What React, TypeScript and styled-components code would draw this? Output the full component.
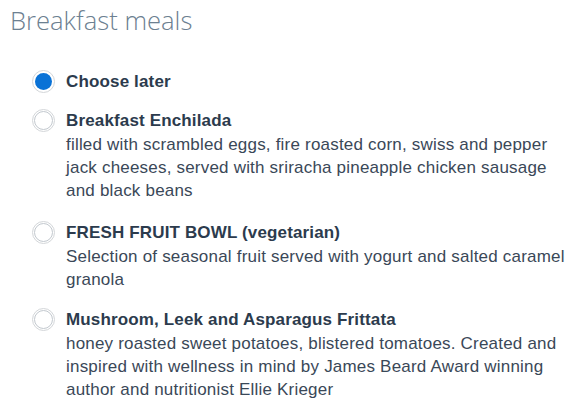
import React, { useState } from "react";
import styled, { createGlobalStyle } from "styled-components";

const GlobalStyle = createGlobalStyle`
  html, body {
    margin: 0;
    padding: 0;
    background: #ffffff;
  }
  * { box-sizing: border-box; }
`;

const Page = styled.div`
  padding: 4px 10px 0 10px;
  width: 580px;
`;

const Heading = styled.h2`
  margin: 0;
  font-family: "Open Sans", sans-serif;
  font-weight: 300;
  font-size: 25.6px;
  line-height: 34px;
  color: #6c8091;
`;

const OptionList = styled.div`
  display: flex;
  flex-direction: column;
  margin-top: 32px;
  padding-left: 22px;
`;

const Option = styled.label<{ $gap: number }>`
  display: flex;
  align-items: flex-start;
  gap: 11px;
  margin-bottom: ${(p) => p.$gap}px;
  cursor: pointer;
  font-family: "Liberation Sans", Arial, sans-serif;
  font-size: 17px;
  line-height: 23.3px;
  color: #2e3d4f;
`;

const Radio = styled.span<{ $checked: boolean }>`
  flex: none;
  width: 23px;
  height: 23px;
  border-radius: 50%;
  border: 1.5px solid #d3d6d9;
  background: #ffffff;
  display: flex;
  align-items: center;
  justify-content: center;

  &::after {
    content: "";
    width: 17px;
    height: 17px;
    border-radius: 50%;
    background: ${(p) => (p.$checked ? "#0a72d6" : "#ffffff")};
    border: ${(p) => (p.$checked ? "none" : "1.5px solid #c2c8ce")};
  }
`;

const Text = styled.div`
  display: flex;
  flex-direction: column;
`;

const Title = styled.span`
  font-weight: 700;
  letter-spacing: 0.15px;
  color: #2c3b4d;
`;

const Description = styled.span`
  letter-spacing: 0.2px;
  color: #3a4858;
`;

type Meal = { title: string; description?: string; gap: number };

const meals: Meal[] = [
  { title: "Choose later", gap: 16 },
  {
    title: "Breakfast Enchilada",
    description:
      "filled with scrambled eggs, fire roasted corn, swiss and pepper jack cheeses, served with sriracha pineapple chicken sausage and black beans",
    gap: 19,
  },
  {
    title: "FRESH FRUIT BOWL (vegetarian)",
    description:
      "Selection of seasonal fruit served with yogurt and salted caramel granola",
    gap: 17,
  },
  {
    title: "Mushroom, Leek and Asparagus Frittata",
    description:
      "honey roasted sweet potatoes, blistered tomatoes. Created and inspired with wellness in mind by James Beard Award winning author and nutritionist Ellie Krieger",
    gap: 19,
  },
];

export default function App() {
  const [selected, setSelected] = useState(0);
  return (
    <Page>
      <GlobalStyle />
      <Heading>Breakfast meals</Heading>
      <OptionList>
        {meals.map((m, i) => (
          <Option key={m.title} $gap={m.gap} onClick={() => setSelected(i)}>
            <Radio $checked={selected === i} />
            <Text>
              <Title>{m.title}</Title>
              {m.description && <Description>{m.description}</Description>}
            </Text>
          </Option>
        ))}
      </OptionList>
    </Page>
  );
}
